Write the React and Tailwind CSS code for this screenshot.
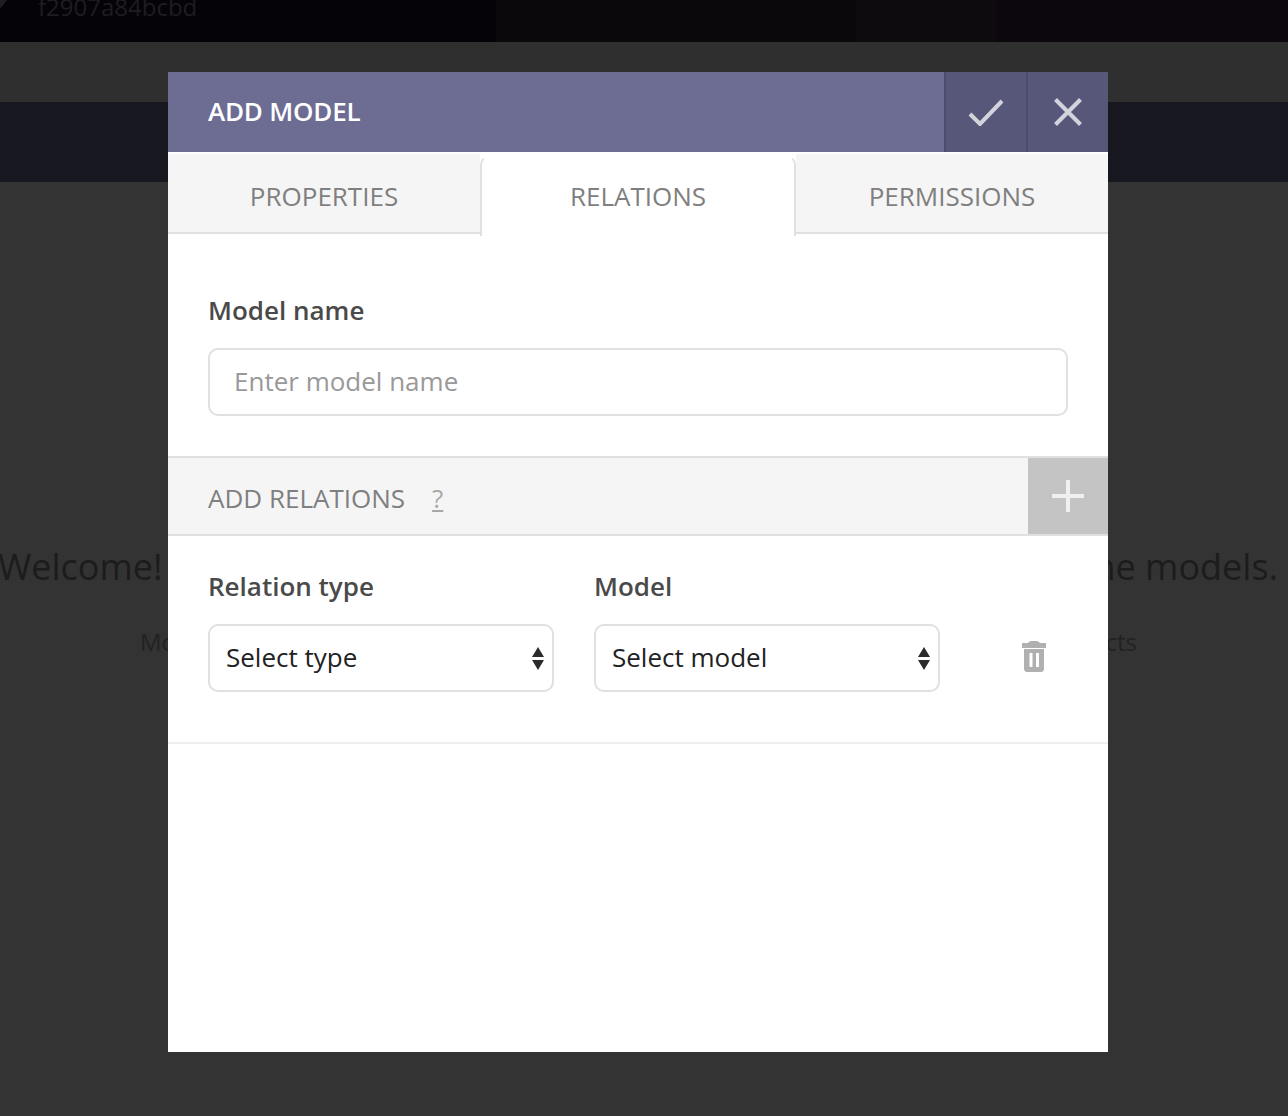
import React from 'react'

const Tab = ({ label, active }) => {
  if (active) {
    return (
      <div className="w-[316px] h-[81px] mt-[3px] -mb-[2px] bg-white border-x-2 border-t-2 border-x-[#e0e0e0] border-t-white rounded-t-[10px] flex items-center justify-center text-[26px] text-[#7f7f7f]">
        {label}
      </div>
    )
  }
  return (
    <div className="flex-1 h-[80px] mt-[2px] pt-[6px] bg-[#f5f5f5] border-b-2 border-[#e0e0e0] flex items-center justify-center text-[26px] text-[#7f7f7f]">
      {label}
    </div>
  )
}

const SelectBox = ({ label, placeholder }) => (
  <div className="w-[346px]">
    <label className="block text-[26px] leading-[36px] font-semibold text-[#4a4a4a] mb-[20px]">{label}</label>
    <div className="relative">
      <select className="w-full h-[68px] appearance-none bg-white border-2 border-[#e0e0e0] rounded-[10px] pl-[16px] pr-[40px] pb-[2px] text-[26px] text-[#222222] outline-none">
        <option>{placeholder}</option>
      </select>
      <svg className="absolute right-[9px] top-[23px] pointer-events-none" width="14" height="24" viewBox="0 0 14 24">
        <path d="M7 0 L13 10 H1 Z" fill="#2b2b2b" />
        <path d="M1 13 H13 L7 23 Z" fill="#2b2b2b" />
      </svg>
    </div>
  </div>
)

export default function App() {
  return (
    <div className="relative w-[1288px] h-[1116px] overflow-hidden bg-[#333333] font-['Open_Sans',sans-serif]">
      <div className="relative h-[42px] bg-[#050308] flex">
        <svg className="absolute left-0 top-0" width="8" height="10" viewBox="0 0 8 10">
          <path d="M0 9 L7 0 H0 Z" fill="#1f1c22" />
        </svg>
        <div className="w-[496px] -mt-[8px] pl-[38px] text-[24px] leading-[30px] text-[#1f1c22]">f2907a84bcbd</div>
        <div className="w-[360px] bg-[#0b080c]" />
        <div className="w-[140px] bg-[#0e0b0f]" />
        <div className="flex-1 bg-[#0b070c]" />
      </div>
      <div className="h-[60px] bg-[#2f2f2f]" />
      <div className="h-[80px] bg-[#16171f]" />
      <div className="pt-[360px] flex justify-between -ml-[2px] pr-[10px] text-[36px] leading-[50px] text-[#1c1c1c] whitespace-nowrap">
        <span>Welcome!</span>
        <span>the models.</span>
      </div>
      <div className="mt-[35px] flex justify-between pl-[140px] pr-[151px] text-[24px] leading-[30px] text-[#222222] whitespace-nowrap">
        <span>Models</span>
        <span>projects</span>
      </div>

      <div className="absolute left-[168px] top-[72px] w-[940px] h-[980px] bg-white flex flex-col">
        <div className="h-[80px] shrink-0 bg-[#6d6d94] flex items-stretch">
          <div className="flex-1 pl-[40px] pb-[2px] flex items-center text-[26px] font-semibold tracking-[-0.2px] text-white">ADD MODEL</div>
          <button className="w-[82px] bg-[#57577a] border-l-2 border-[#4c4c6b] flex items-center justify-center">
            <svg width="36" height="28" viewBox="0 0 36 28" fill="none">
              <path d="M2 16 L12 26 L34 3" stroke="#d4d4dc" strokeWidth="4" />
            </svg>
          </button>
          <button className="w-[82px] bg-[#57577a] border-l-2 border-[#4c4c6b] flex items-center justify-center">
            <svg width="28" height="28" viewBox="0 0 28 28" fill="none">
              <path d="M1.5 1.5 L26.5 26.5 M26.5 1.5 L1.5 26.5" stroke="#d4d4dc" strokeWidth="4" />
            </svg>
          </button>
        </div>

        <div className="flex shrink-0 items-start">
          <Tab label="PROPERTIES" />
          <Tab label="RELATIONS" active />
          <Tab label="PERMISSIONS" />
        </div>

        <div className="px-[40px] pt-[58px] pb-[40px]">
          <label className="block text-[26px] leading-[36px] font-semibold text-[#4a4a4a] mb-[20px]">Model name</label>
          <input
            className="w-full h-[68px] bg-white border-2 border-[#e0e0e0] rounded-[10px] px-[24px] pb-[2px] text-[26px] text-[#222222] placeholder:text-[#999999] outline-none"
            placeholder="Enter model name"
          />
        </div>

        <div className="h-[80px] shrink-0 bg-[#f5f5f5] border-y-2 border-[#e0e0e0] flex items-stretch">
          <div className="flex-1 pl-[40px] pt-[4px] flex items-center gap-[27px] text-[26px] text-[#7f7f7f]">
            <span>ADD RELATIONS</span>
            <span className="underline text-[#a8a8a8]">?</span>
          </div>
          <button className="w-[80px] bg-[#c4c4c4] flex items-center justify-center">
            <svg width="34" height="34" viewBox="0 0 34 34" fill="none">
              <path d="M17 1 V33 M1 17 H33" stroke="#f0f0f0" strokeWidth="4" />
            </svg>
          </button>
        </div>

        <div className="px-[40px] pt-[32px] pb-[50px] border-b-2 border-[#efefef] flex gap-[40px] items-end">
          <SelectBox label="Relation type" placeholder="Select type" />
          <SelectBox label="Model" placeholder="Select model" />
          <div className="flex-1 h-[68px] flex items-center justify-center pl-[20px]">
            <svg className="-mt-[2px]" width="24" height="32" viewBox="0 0 24 32">
              <path d="M0 2 H6 C7 0.7 8 0 9.5 0 H14.5 C16 0 17 0.7 18 2 H24 V7 H0 Z" fill="#b0b0b0" />
              <path fillRule="evenodd" d="M2 8 H22 V28 C22 30 20.5 31 19 31 H5 C3.5 31 2 30 2 28 Z M7.5 12 V26 H10.5 V12 Z M14 12 V26 H17 V12 Z" fill="#b0b0b0" />
            </svg>
          </div>
        </div>
      </div>
    </div>
  )
}
